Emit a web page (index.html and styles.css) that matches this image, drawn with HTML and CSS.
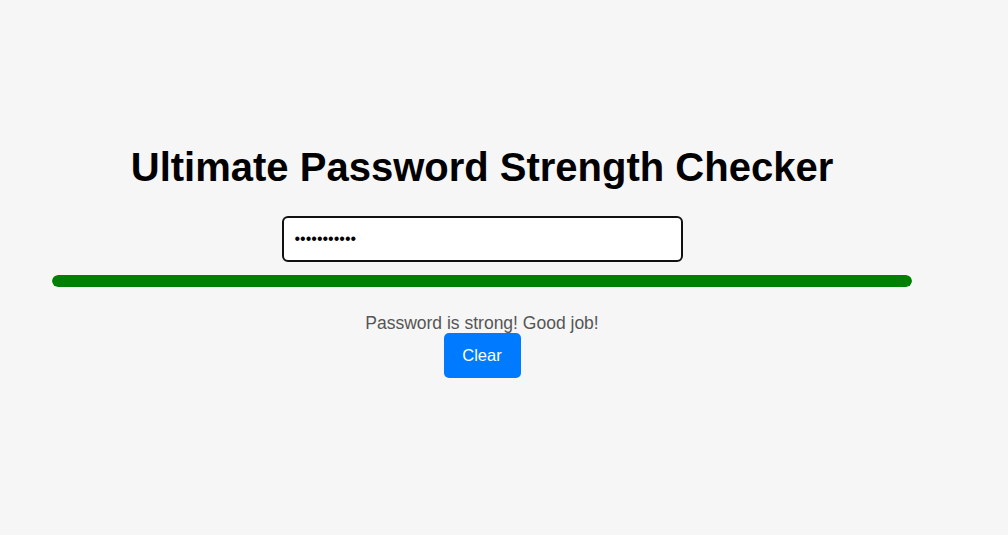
FILE: index.html
```html
<!DOCTYPE html>
<html lang="en">
<head>
<meta charset="utf-8">
<title>Ultimate Password Strength Checker</title>
<link rel="stylesheet" href="styles.css">
</head>
<body>
<main class="checker">
  <h1 class="title">Ultimate Password Strength Checker</h1>
  <input class="pw-input" type="password" value="Abc!2345xyz" aria-label="Password">
  <div class="meter"><div class="meter-fill" style="width:100%"></div></div>
  <p class="message">Password is strong! Good job!</p>
  <button class="clear-btn" type="button">Clear</button>
</main>
</body>
</html>
```
FILE: styles.css
```css
html, body {
  margin: 0;
  padding: 0;
  background: #f6f6f6;
}
body {
  font-family: "Liberation Sans", Arial, sans-serif;
  height: 535px;
  overflow: hidden;
}
.checker {
  width: 860px;
  margin-left: 52px;
  padding-top: 144px;
  display: flex;
  flex-direction: column;
  align-items: center;
}
.title {
  margin: 0;
  font-size: 40px;
  font-weight: bold;
  color: #000;
  line-height: 46px;
}
.pw-input {
  margin-top: 26px;
  box-sizing: border-box;
  width: 401px;
  height: 46px;
  border: 2px solid #111;
  border-radius: 6px;
  background: #fff;
  padding: 0 11px;
  font-size: 16px;
  font-family: "Liberation Sans", Arial, sans-serif;
  color: #000;
  outline: none;
}
.meter {
  margin-top: 13px;
  width: 860px;
  height: 12px;
  border-radius: 6px;
  background: #ddd;
  overflow: hidden;
}
.meter-fill {
  height: 100%;
  background: #008000;
  border-radius: 6px;
}
.message {
  margin: 26px 0 0;
  font-size: 17.5px;
  line-height: 20px;
  color: #555;
}
.clear-btn {
  margin-top: 0;
  width: 77px;
  height: 45px;
  border: none;
  border-radius: 5px;
  background: #007bff;
  color: #fff;
  font-size: 16.5px;
  font-family: "Liberation Sans", Arial, sans-serif;
  cursor: pointer;
}
```
